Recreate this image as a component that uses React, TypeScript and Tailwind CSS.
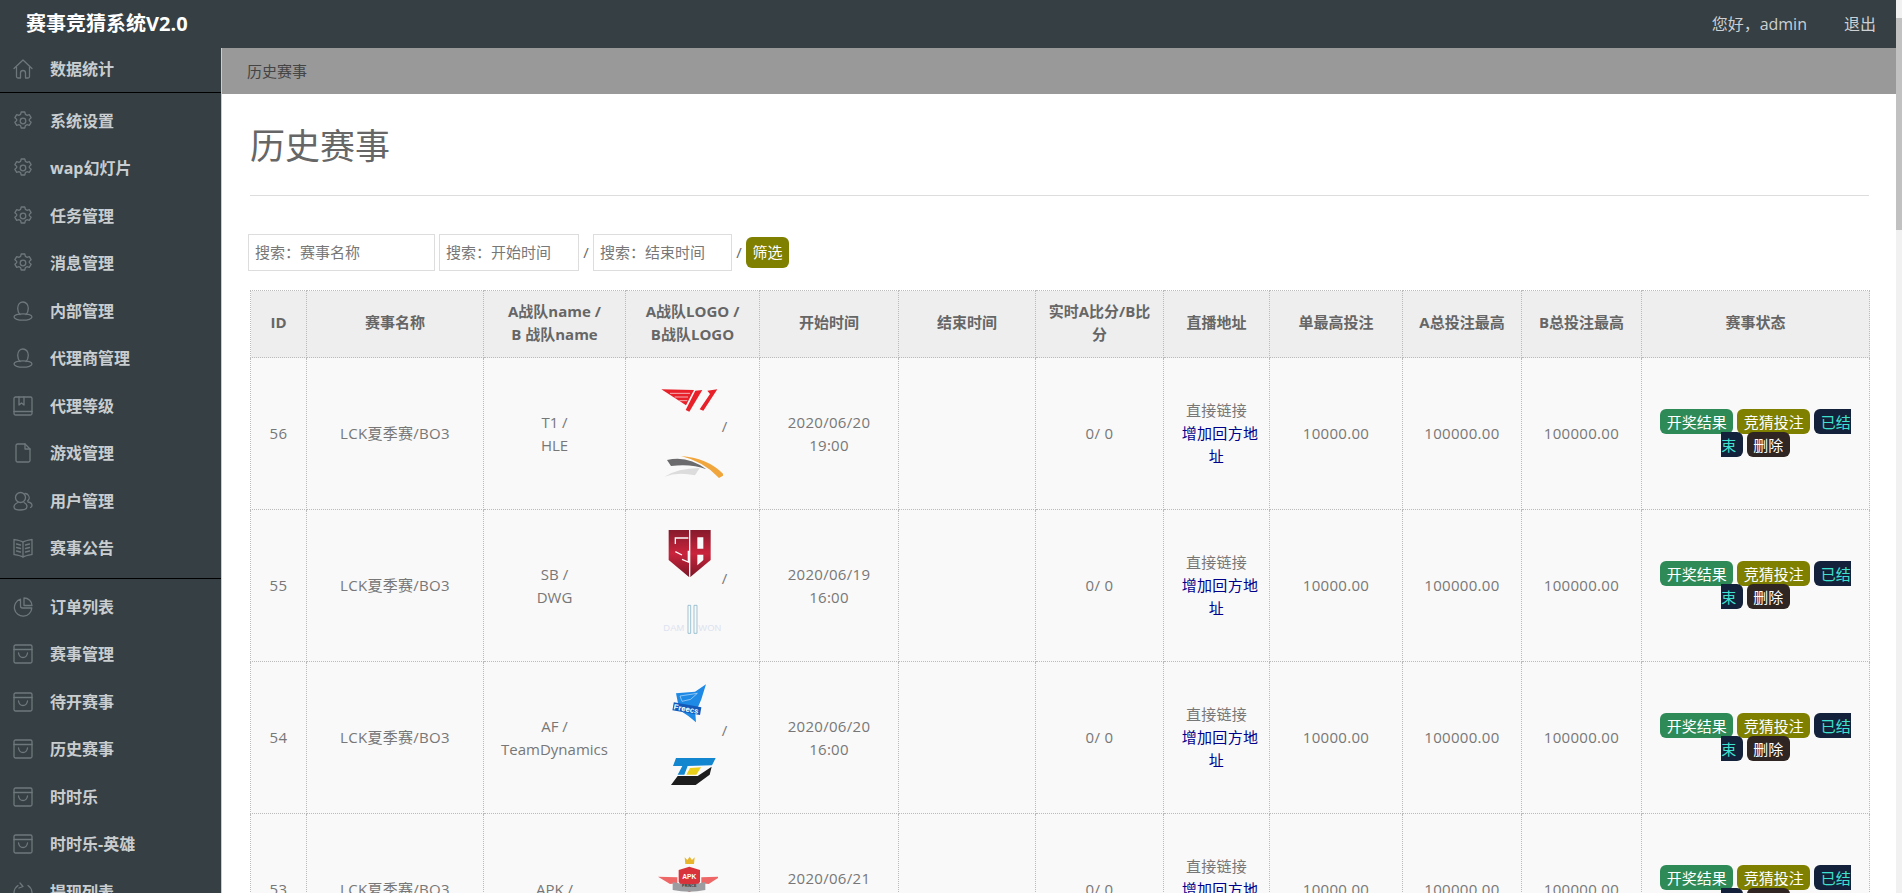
import type { ReactNode } from "react";

const iconClass = "w-[20px] h-[20px] shrink-0";

function Icon({ children }: { children: ReactNode }) {
    return (
        <svg viewBox="0 0 20 20" fill="none" stroke="#6e787c" strokeWidth="1.3" strokeLinecap="round" strokeLinejoin="round" className={iconClass}>
            {children}
        </svg>
    );
}

const HomeIcon = () => (
    <Icon>
        <path d="M1 9.5 10 1l9 8.5" />
        <path d="M3.5 8v9.5a1.5 1.5 0 0 0 1.5 1.5h2.5v-5a2.5 2.5 0 0 1 5 0v5H15a1.5 1.5 0 0 0 1.5-1.5V8" />
    </Icon>
);
const GearIcon = () => (
    <Icon>
        <path d="M8.2 1h3.6l.6 2.4 1.5.9 2.4-.7 1.8 3.1-1.8 1.7v1.2l1.8 1.7-1.8 3.1-2.4-.7-1.5.9-.6 2.4H8.2l-.6-2.4-1.5-.9-2.4.7-1.8-3.1 1.8-1.7V8.4L1.9 6.7l1.8-3.1 2.4.7 1.5-.9z" />
        <circle cx="10" cy="10" r="2.8" />
    </Icon>
);
const UserIcon = () => (
    <Icon>
        <path d="M7 13.5c-1.5-1.5-2.3-3.4-2.3-6.2C4.700 3.500 7 1 10 1s5.300 2.500 5.300 6.300c0 2.800-.8 4.700-2.300 6.200" />
        <ellipse cx="10" cy="16" rx="9" ry="3.200" />
    </Icon>
);
const NoteIcon = () => (
    <Icon>
        <rect x="1" y="1" width="18" height="18" rx="1.500" />
        <path d="M1 15.500h18M6 1v8l2.500-2 2.500 2V1" />
    </Icon>
);
const FileIcon = () => (
    <Icon>
        <path d="M3 2.500A1.500 1.500 0 0 1 4.500 1h7.500L17 6v11.500a1.500 1.500 0 0 1-1.500 1.500h-11A1.500 1.500 0 0 1 3 17.500z" />
        <path d="M12 1v5h5" />
    </Icon>
);
const UsersIcon = () => (
    <Icon>
        <circle cx="7.500" cy="6.500" r="5" />
        <path d="M12 2.500a4 4 0 0 1 3.500 2 4 4 0 0 1-1 5.500" />
        <path d="M5 11.500C2.500 12.500 1 14 1 16c0 2 2 3 6 3s7-1 7-3.500c0-1.500-1-3-3-4" />
        <path d="M15 11c2.500.5 4 1.500 4 3.500 0 1-.5 1.500-1.500 2" />
    </Icon>
);
const OpenBookIcon = () => (
    <Icon>
        <path d="M10 4 C7.500 2.500 4 2 1 1.500v15c3 .5 6.500 1 9 2.500 2.500-1.500 6-2 9-2.500v-15C16 2 12.500 2.500 10 4z" />
        <path d="M10 4v15M3.500 6l4 1M3.500 9.500l4 1M3.500 13l4 1M16.500 6l-4 1M16.500 9.500l-4 1M16.500 13l-4 1" />
    </Icon>
);
const PieIcon = () => (
    <Icon>
        <path d="M7.500 2.200a8.700 8.700 0 1 0 11.300 8.800H9.500a2 2 0 0 1-2-2z" />
        <path d="M11 1c4.400 0 8 3.300 8 7.500h-8z" />
    </Icon>
);
const BagIcon = () => (
    <Icon>
        <rect x="1" y="1" width="18" height="18" rx="1.500" />
        <path d="M1 5.500h18M5.500 9c.5 3 2.200 4.500 4.500 4.500s4-1.500 4.500-4.500" />
    </Icon>
);
const RefreshIcon = () => (
    <Icon>
        <path d="M5 3.500A9 9 0 1 0 15 3.500" />
        <path d="M7 1 10 4.500 6 6" />
    </Icon>
);

function NavItem({ icon, label }: { icon: ReactNode; label: string }) {
    return (
        <a className="flex items-center h-[47.5px] pl-[13px] gap-[17px] text-[16px] text-[#c9cdcf] font-bold shrink-0">
            {icon}
            <span>{label}</span>
        </a>
    );
}

function Sidebar() {
    return (
        <aside className="w-[221px] shrink-0 bg-[#353f44] flex flex-col overflow-hidden">
            <div className="h-[42px] pb-[2px] flex items-center pl-[13px] gap-[17px] text-[16px] text-[#c9cdcf] font-bold border-b border-black box-content shrink-0">
                <HomeIcon />
                <span>数据统计</span>
            </div>
            <div className="pt-[4px] pb-[6px] border-b border-black shrink-0">
                <NavItem icon={<GearIcon />} label="系统设置" />
                <NavItem icon={<GearIcon />} label="wap幻灯片" />
                <NavItem icon={<GearIcon />} label="任务管理" />
                <NavItem icon={<GearIcon />} label="消息管理" />
                <NavItem icon={<UserIcon />} label="内部管理" />
                <NavItem icon={<UserIcon />} label="代理商管理" />
                <NavItem icon={<NoteIcon />} label="代理等级" />
                <NavItem icon={<FileIcon />} label="游戏管理" />
                <NavItem icon={<UsersIcon />} label="用户管理" />
                <NavItem icon={<OpenBookIcon />} label="赛事公告" />
            </div>
            <div className="pt-[4px] shrink-0">
                <NavItem icon={<PieIcon />} label="订单列表" />
                <NavItem icon={<BagIcon />} label="赛事管理" />
                <NavItem icon={<BagIcon />} label="待开赛事" />
                <NavItem icon={<BagIcon />} label="历史赛事" />
                <NavItem icon={<BagIcon />} label="时时乐" />
                <NavItem icon={<BagIcon />} label="时时乐-英雄" />
                <NavItem icon={<RefreshIcon />} label="提现列表" />
            </div>
        </aside>
    );
}

function Logo({ box, children }: { box: string; children: ReactNode }) {
    return (
        <svg viewBox={box} className="inline-block w-[60px] h-[60px] align-baseline">
            {children}
        </svg>
    );
}

const T1Logo = () => (
    <Logo box="114 36 180 180">
        <path d="M124 88 222 90 198 136z" fill="#e8202a" />
        <path d="M150 100h60M164 111h40M178 122h24" stroke="#f9f9f9" strokeWidth="2" />
        <path d="M226 92 247 90 208 155 197 150z" fill="#e8202a" />
        <path d="M262 92 292 88 250 152 239 148 270 102z" fill="#e8202a" />
    </Logo>
);
const HleLogo = () => (
    <Logo box="126 228 180 180">
        <path d="M180 288Q260 293 310 345L294 354Q250 305 180 288z" fill="#f0a63c" />
        <path d="M138 300Q200 285 256 328 210 310 150 318z" fill="#6b6b6d" />
        <path d="M130 350Q170 325 236 324L222 346Q170 335 130 350z" fill="#dcdcdc" />
    </Logo>
);
const SbLogo = () => (
    <Logo box="114 492 180 180">
        <defs>
            <linearGradient id="sbRed" x1="0" y1="0" x2="0" y2="1">
                <stop offset="0" stopColor="#861a2c" />
                <stop offset="0.5" stopColor="#c9243c" />
                <stop offset="1" stopColor="#7d1728" />
            </linearGradient>
        </defs>
        <path d="M146 510H272V600L212 650 206 650 146 600z" fill="url(#sbRed)" />
        <path d="M209 510V650" stroke="#f9f9f9" strokeWidth="4" />
        <path d="M205 534H166V552M205 572V606L186 598M166 575 186 585" fill="none" stroke="#f9f9f9" strokeWidth="4" />
        <path d="M232 532H250V566H232zM232 584H250V600L232 616z" fill="#f9f9f9" />
    </Logo>
);
const DamwonLogo = () => (
    <Logo box="126 684 180 180">
        <text x="127" y="812" fontSize="28" fontFamily="Liberation Sans, sans-serif" fill="#dde3ef">DAM</text>
        <text x="232" y="812" fontSize="28" fontFamily="Liberation Sans, sans-serif" fill="#dde3ef">WON</text>
        <path d="M201 736H209V820H201zM219 736H228V820H219z" fill="none" stroke="#8fb8cb" strokeWidth="2.500" />
    </Logo>
);
const FreecsLogo = () => (
    <Logo box="114 48 180 180">
        <path d="M168 100 225 95 258 73 244 118 226 160 228 187 205 168 178 150z" fill="#1e8ae6" />
        <path d="M180 108 232 100 212 118 186 124z" fill="none" stroke="#bfe0fb" strokeWidth="2" />
        <g transform="rotate(10 200 150)">
            <rect x="158" y="134" width="84" height="24" fill="#1559b8" />
            <text x="160" y="155" fontSize="23" fontWeight="700" fontFamily="Liberation Sans, sans-serif" fill="#ffffff">Freecs</text>
        </g>
    </Logo>
);
const DynamicsLogo = () => (
    <Logo box="126 240 180 180">
        <path d="M165 294H284L273 316 200 318 190 344H170L184 318H156z" fill="#1286cf" />
        <path d="M207 324 240 322 226 344H196z" fill="#e9cf18" />
        <path d="M170 348H230L272 320 266 344 224 375H150z" fill="#1d1d1d" />
    </Logo>
);
const ApkLogo = () => (
    <Logo box="114 504 180 180">
        <path d="M194 532 202 540 209 530 216 540 224 532 222 552H196z" fill="#e7b62c" />
        <path d="M114 590 172 592 172 610 150 612z" fill="#e66" />
        <path d="M300 590 244 592 244 610 266 612z" fill="#e66" />
        <path d="M176 570 208 560 240 570V605Q228 628 208 636 188 628 176 605z" fill="#d8333a" />
        <path d="M158 606Q208 620 256 606V630Q208 640 158 630z" fill="#9b9da0" />
        <text x="208" y="598" textAnchor="middle" fontSize="20" fontWeight="700" fontFamily="Liberation Sans, sans-serif" fill="#ffffff">APK</text>
        <text x="208" y="621" textAnchor="middle" fontSize="11" fontWeight="700" fontFamily="Liberation Sans, sans-serif" fill="#333333">PRINCE</text>
    </Logo>
);

const th = "border border-dotted border-[#bbb] px-[8px] pb-[3px] font-bold text-[15px] leading-[23px] text-[#666] text-center align-middle";
const td = "border border-dotted border-[#bbb] px-[8px] text-[15px] leading-[23px] tracking-[0.3px] text-[#777] text-center align-middle bg-[#f9f9f9]";

const matches = [
    { id: 56, a: "T1", b: "HLE", logoA: <T1Logo />, logoB: <HleLogo />, date: "2020/06/20 19:00" },
    { id: 55, a: "SB", b: "DWG", logoA: <SbLogo />, logoB: <DamwonLogo />, date: "2020/06/19 16:00" },
    { id: 54, a: "AF", b: "TeamDynamics", logoA: <FreecsLogo />, logoB: <DynamicsLogo />, date: "2020/06/20 16:00" },
    { id: 53, a: "APK", b: "", logoA: <ApkLogo />, logoB: null, date: "2020/06/21 16:00" },
];

function MatchRow({ m }: { m: (typeof matches)[number] }) {
    return (
        <tr>
            <td className={`${td} h-[152px]`}>{m.id}</td>
            <td className={td}>LCK夏季赛/BO3</td>
            <td className={`${td} !tracking-normal`}>
                {m.a} /<br />
                {m.b}
            </td>
            <td className={`${td} !px-0 !pt-[6px]`}>
                {m.logoA} /<br />
                <span className="inline-block -mt-[2px]">{m.logoB}</span>
            </td>
            <td className={td}>{m.date}</td>
            <td className={td}></td>
            <td className={td}>0/ 0</td>
            <td className={td}>
                直接链接
                <br />
                <a className="ml-[7px] text-[#00008b]">增加回方地址</a>
            </td>
            <td className={td}>10000.00</td>
            <td className={td}>100000.00</td>
            <td className={td}>100000.00</td>
            <td className={`${td} !px-[10px] !tracking-normal`}>
                <span className="bg-[#2e8b57] text-white rounded-[6px] px-[6.5px] py-[2.5px]">开奖结果</span>{" "}
                <span className="bg-[#808000] text-white rounded-[6px] px-[6.5px] py-[2.5px]">竞猜投注</span>{" "}
                <span className="bg-[#14213a] text-[#40e0d0] rounded-[6px] px-[6.5px] py-[2.5px]">已结束</span>{" "}
                <span className="bg-[#2f2523] text-white rounded-[6px] px-[6.5px] py-[2.5px]">删除</span>
            </td>
        </tr>
    );
}

export default function App() {
    return (
        <div className="flex h-screen overflow-hidden bg-white font-['Open_Sans','Noto_Sans_CJK_SC',sans-serif]">
            <div className="flex-1 min-w-0 flex flex-col">
                <header className="h-[48px] shrink-0 bg-[#353f44] flex items-center justify-between pl-[26px] pr-[20px]">
                    <span className="text-white font-bold text-[20px]">赛事竞猜系统V2.0</span>
                    <div className="flex gap-[37px] text-[16px] text-[#ccd0d2]">
                        <span>您好，admin</span>
                        <span>退出</span>
                    </div>
                </header>
                <div className="flex flex-1 min-h-0">
                    <Sidebar />
                    <main className="flex-1 min-w-0 border-l border-[#ccc] overflow-hidden">
                        <div className="h-[46px] bg-[#999] flex items-center pl-[25px] text-[15px] text-[#444]">历史赛事</div>
                        <div className="pl-[28px] pr-[27px]">
                            <div className="h-[102px] pt-[4px] flex items-center border-b border-[#ddd] text-[35px] text-[#666]">历史赛事</div>
                            <div className="mt-[38px] -ml-[2px] h-[37px] flex items-center text-[15px] text-[#666]">
                                <input placeholder="搜索：赛事名称" className="w-[187px] h-[37px] px-[6px] pb-[2px] border border-[#ddd] placeholder:text-[#777] outline-none" />
                                <input placeholder="搜索：开始时间" className="ml-[4px] w-[140px] h-[37px] px-[6px] pb-[2px] border border-[#ddd] placeholder:text-[#777] outline-none" />
                                <span className="w-[14px] text-center">/</span>
                                <input placeholder="搜索：结束时间" className="w-[139px] h-[37px] px-[6px] pb-[2px] border border-[#ddd] placeholder:text-[#777] outline-none" />
                                <span className="w-[14px] text-center">/</span>
                                <button className="w-[43px] h-[31px] bg-[#808000] text-white rounded-[6px]">筛选</button>
                            </div>
                            <table className="mt-[19px] w-[1619px] table-fixed border-collapse">
                                <colgroup>
                                    <col className="w-[56px]" />
                                    <col className="w-[177px]" />
                                    <col className="w-[142px]" />
                                    <col className="w-[134px]" />
                                    <col className="w-[139px]" />
                                    <col className="w-[137px]" />
                                    <col className="w-[128px]" />
                                    <col className="w-[106px]" />
                                    <col className="w-[133px]" />
                                    <col className="w-[119px]" />
                                    <col className="w-[120px]" />
                                    <col className="w-[228px]" />
                                </colgroup>
                                <thead>
                                    <tr className="h-[67px] bg-[#eee]">
                                        <th className={th}>ID</th>
                                        <th className={th}>赛事名称</th>
                                        <th className={th}>A战队name /<br />B 战队name</th>
                                        <th className={th}>A战队LOGO /<br />B战队LOGO</th>
                                        <th className={th}>开始时间</th>
                                        <th className={th}>结束时间</th>
                                        <th className={th}>实时A比分/B比分</th>
                                        <th className={th}>直播地址</th>
                                        <th className={th}>单最高投注</th>
                                        <th className={th}>A总投注最高</th>
                                        <th className={th}>B总投注最高</th>
                                        <th className={th}>赛事状态</th>
                                    </tr>
                                </thead>
                                <tbody>
                                    {matches.map((m) => (
                                        <MatchRow key={m.id} m={m} />
                                    ))}
                                </tbody>
                            </table>
                        </div>
                    </main>
                </div>
            </div>
            <div className="w-[6px] shrink-0 bg-[#f1f1f1] pt-[18px]">
                <div className="h-[212px] bg-[#c1c1c1]"></div>
            </div>
        </div>
    );
}
